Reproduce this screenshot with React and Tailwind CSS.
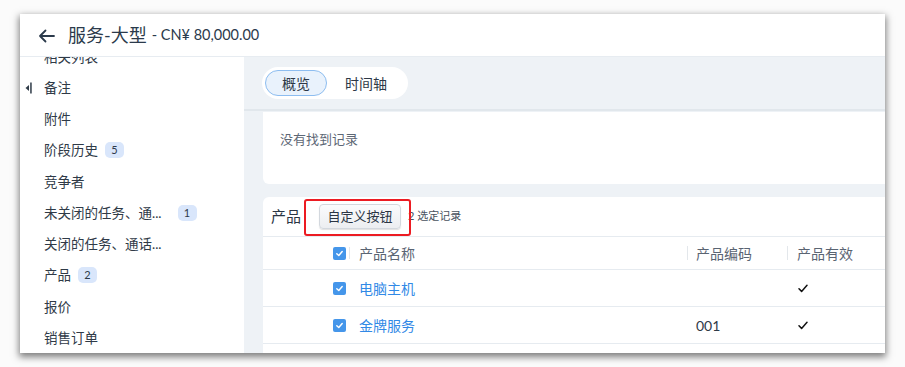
import React from "react";

const font = { fontFamily: "Lato, 'Noto Sans CJK SC', sans-serif" };

function Check() {
  return (
    <span className="flex h-[13px] w-[13px] items-center justify-center rounded-[2px] bg-[#4596ea]">
      <svg width="9" height="9" viewBox="0 0 10 10">
        <path d="M2 5.2 L4.2 7.3 L8 2.8" fill="none" stroke="white" strokeWidth="1.6" strokeLinecap="round" strokeLinejoin="round" />
      </svg>
    </span>
  );
}

function Badge({ n, ml }) {
  return (
    <span className={`${ml} flex h-[16px] w-[19px] items-center justify-center rounded-[5px] bg-[#d9e6fb] text-[11px] text-[#2d3a4a]`}>
      {n}
    </span>
  );
}

const items = [
  { t: "相关列表" },
  { t: "备注" },
  { t: "附件" },
  { t: "阶段历史", b: "5", ml: "ml-[7px]" },
  { t: "竞争者" },
  { t: "未关闭的任务、通...", b: "1", ml: "ml-[16px]" },
  { t: "关闭的任务、通话..." },
  { t: "产品", b: "2", ml: "ml-[7px]" },
  { t: "报价" },
  { t: "销售订单" },
];

export default function App() {
  return (
    <div className="h-[367px] w-[905px] overflow-hidden bg-[#fbfbfb] pl-[20px] pt-[14px]" style={font}>
      <div className="flex h-[339px] w-[865px] flex-col overflow-hidden bg-white shadow-[0_3px_7px_1px_rgba(0,0,0,0.5)]">
        {/* header */}
        <div className="flex h-[43px] shrink-0 items-center border-b border-[#e7ecf1] pl-[18px] text-[#2b3a4b]">
          <svg width="17" height="14" viewBox="0 0 17 14" className="mt-[1px]">
            <path d="M16 7 H2 M7.5 1.5 L2 7 L7.5 12.5" fill="none" stroke="#2b3a4b" strokeWidth="1.8" strokeLinecap="round" strokeLinejoin="round" />
          </svg>
          <span className="ml-[13px] text-[18px] leading-none">服务-大型</span>
          <span className="ml-[5px] text-[14.5px] leading-none">- CN¥ 80,000.00</span>
        </div>
        {/* body */}
        <div className="flex min-h-0 flex-1">
          {/* sidebar */}
          <div className="relative w-[224px] shrink-0 overflow-hidden bg-white">
            <div className="absolute left-[5px] top-[25px]">
              <svg width="7" height="12" viewBox="0 0 7 12">
                <path d="M0.5 6 L4 3 L4 9 Z" fill="#2f3b48" />
                <rect x="5.2" y="0.5" width="1.5" height="11" fill="#2f3b48" />
              </svg>
            </div>
            <div className="mt-[-16px] flex flex-col text-[13.5px] text-[#2f3a47]">
              {items.map((it, i) => (
                <div key={i} className="flex h-[31.25px] items-center pl-[24px]">
                  <span>{it.t}</span>
                  {it.b && <Badge n={it.b} ml={it.ml} />}
                </div>
              ))}
            </div>
          </div>
          {/* main */}
          <div className="flex min-w-0 flex-1 flex-col overflow-hidden bg-[#eef2f6]">
            <div className="flex h-[54px] shrink-0 items-center border-b-2 border-[#e1e7ec] pl-[18px]">
              <div className="flex h-[32px] w-[146px] items-center rounded-full bg-white pl-[3px] text-[14px] text-[#2d3846]">
                <div className="flex h-[26px] w-[62px] items-center justify-center rounded-full border border-[#8dbdf0] bg-[#e9f2fc]">概览</div>
                <div className="ml-[18px]">时间轴</div>
              </div>
            </div>
            <div className="ml-[19px] mr-[-12px] mt-[1px] flex h-[72px] shrink-0 items-center rounded-b-[6px] bg-white pb-[16px] pl-[17px] text-[13px] text-[#5d6775]">
              没有找到记录
            </div>
            <div className="relative ml-[19px] mr-[-12px] mt-[13px] flex-1 rounded-t-[6px] bg-white">
              <div className="flex h-[40px] items-center border-b border-[#e6ebf0] pl-[8px]">
                <span className="text-[15px] text-[#2a3544]">产品</span>
                <div className="ml-[18px] flex h-[25px] w-[82px] items-center justify-center rounded-[4px] border border-[#d3d8de] bg-gradient-to-b from-[#fafbfc] to-[#eceef1] text-[13px] text-[#2a3544] shadow-[0_1px_1px_rgba(0,0,0,0.12)]">
                  自定义按钮
                </div>
                <span className="ml-[7px] text-[11px] text-[#48525e]">2 选定记录</span>
              </div>
              <div className="absolute left-[41px] top-[2px] h-[37px] w-[107px] rounded-[3px] border-2 border-[#ec1b22]" />
              {/* table header */}
              <div className="flex h-[33px] items-center border-b border-[#e6ebf0] text-[14px] text-[#5a6472]">
                <div className="w-[70px]" />
                <Check />
                <div className="ml-[3px] h-[12px] w-px bg-[#e3e7eb]" />
                <div className="w-[337px] pl-[9px]">产品名称</div>
                <div className="h-[14px] w-px bg-[#e3e7eb]" />
                <div className="w-[99px] pl-[8px]">产品编码</div>
                <div className="h-[14px] w-px bg-[#e3e7eb]" />
                <div className="w-[99px] pl-[9px]">产品有效</div>
                <div className="h-[14px] w-px bg-[#e3e7eb]" />
              </div>
              {[
                { n: "电脑主机", c: "" },
                { n: "金牌服务", c: "001" },
              ].map((r, i) => (
                <div key={i} className="flex h-[37px] items-center border-b border-[#e6ebf0] text-[14px]">
                  <div className="w-[70px]" />
                  <Check />
                  <div className="ml-[3px] w-px" />
                  <div className="w-[337px] pl-[9px] text-[#3189e6]">{r.n}</div>
                  <div className="w-px" />
                  <div className="w-[99px] pl-[8px] text-[#2f3a47]">{r.c}</div>
                  <div className="w-px" />
                  <div className="w-[99px] pl-[10px]">
                    <svg width="10" height="9" viewBox="0 0 10 9">
                      <path d="M1 4.8 L3.6 7.4 L9 1.2" fill="none" stroke="#111" strokeWidth="1.5" strokeLinecap="round" strokeLinejoin="round" />
                    </svg>
                  </div>
                </div>
              ))}
            </div>
          </div>
        </div>
      </div>
    </div>
  );
}
